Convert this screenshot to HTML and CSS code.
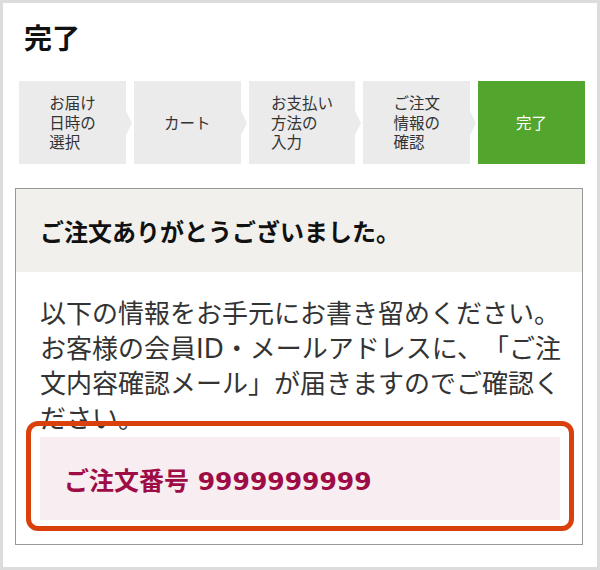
FILE: index.html
```html
<!doctype html>
<html>
<head>
<meta charset="UTF-8">
<title>完了</title>
<link rel="stylesheet" href="styles.css">
</head>
<body>
<div class="page">
  <h1 class="title">完了</h1>

  <div class="steps">
    <div class="step"><span>お届け<br>日時の<br>選択</span></div>
    <div class="step"><span>カート</span></div>
    <div class="step"><span>お支払い<br>方法の<br>入力</span></div>
    <div class="step"><span>ご注文<br>情報の<br>確認</span></div>
    <div class="step current"><span>完了</span></div>
  </div>

  <div class="box">
    <div class="box-head">ご注文ありがとうございました。</div>
    <div class="box-body">
      <p class="note">以下の情報をお手元にお書き留めください。<br>お客様の会員ID・メールアドレスに、「ご注<br>文内容確認メール」が届きますのでご確認く<br>ださい。</p>
      <div class="order">ご注文番号 9999999999</div>
    </div>
  </div>
</div>
</body>
</html>
```

FILE: styles.css
```css
html, body {
	margin: 0;
}

body {
	font-family: "DejaVu Sans", "Noto Sans CJK JP", sans-serif;
	color: #222;
	background: #fff;
}

.page {
	width: 600px;
	height: 570px;
	box-sizing: border-box;
	border: 3px solid #dcdcdc;
	padding: 16px 12px 0 12px;
}

.title {
	margin: 0 0 0 9px;
	font-family: "Noto Sans CJK JP", sans-serif;
	font-size: 28px;
	line-height: 36px;
	font-weight: bold;
	color: #111;
}

/* progress steps */
.steps {
	display: flex;
	gap: 8px;
	width: 566px;
	margin: 26px 0 0 4px;
}

.step {
	position: relative;
	flex: 1;
	height: 83px;
	display: flex;
	align-items: center;
	justify-content: center;
	background: #ebebeb;
	font-family: "Noto Sans CJK JP", sans-serif;
	font-size: 15.5px;
	line-height: 19.5px;
	color: #333;
}

.step:after {
	content: "";
	position: absolute;
	top: 50%;
	left: 100%;
	margin-top: -12px;
	border-left: 6px solid #ebebeb;
	border-top: 12px solid transparent;
	border-bottom: 12px solid transparent;
}

.step.current {
	background: #52a52d;
	color: #fff;
}

.step.current:after {
	display: none;
}

/* thank you box */
.box {
	width: 568px;
	box-sizing: border-box;
	margin-top: 24px;
	border: 1px solid #999;
}

.box-head {
	padding: 25px 24px;
	line-height: 33px;
	background: #f1f0ec;
	font-family: "Noto Sans CJK JP", sans-serif;
	font-size: 24px;
	font-weight: bold;
	color: #111;
}

.box-body {
	padding: 25px 22px 24px 24px;
}

.note {
	margin: 0;
	font-size: 26px;
	line-height: 35px;
	white-space: nowrap;
	text-spacing-trim: space-all;
	color: #333;
}

.order {
	position: relative;
	height: 83px;
	padding: 0 24px;
	display: flex;
	align-items: center;
	background: #f8eef2;
	font-size: 25px;
	font-weight: bold;
	color: #9e0c46;
}

/* highlight frame around the order number */
.order:before {
	content: "";
	position: absolute;
	left: -14px;
	right: -14px;
	top: -16px;
	bottom: -11px;
	border: 5px solid #d9400b;
	border-radius: 12px;
}
```
